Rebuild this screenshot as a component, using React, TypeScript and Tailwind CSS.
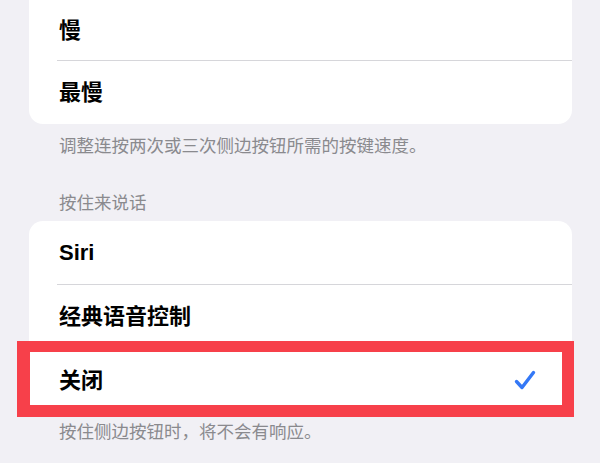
import React from 'react';

const font = { fontFamily: '"Liberation Sans", "Noto Sans CJK SC", sans-serif' };

const Row: React.FC<{ label: string; last?: boolean; checked?: boolean; h?: string }> = ({ label, last, checked, h = 'h-[64px]' }) => (
  <div className={`relative flex items-center pl-[30px] ${h}`}>
    <span className="text-[22px] font-semibold text-black leading-none">{label}</span>
    {checked && (
      <svg className="absolute right-[36px] top-[21px]" width="22" height="20" viewBox="0 0 22 20" fill="none">
        <path d="M2.5 11.5 L8 17.5 L19.5 2.5" stroke="#3478f6" strokeWidth="3.4" strokeLinecap="round" strokeLinejoin="round" />
      </svg>
    )}
    {!last && <div className="absolute bottom-0 left-[28px] right-0 h-px bg-[#d6d6da]" />}
  </div>
);

export default function App() {
  return (
    <div className="w-[600px] h-[463px] overflow-hidden bg-[#f1f0f5]" style={font}>
      <div className="ml-[29px] w-[543px] bg-white rounded-b-[14px]">
        <Row label="慢" h="h-[61px]" />
        <Row label="最慢" h="h-[63px]" last />
      </div>
      <p className="pl-[59px] pt-[11px] text-[17.5px] leading-[22px] text-[#8a8a8e]">
        调整连按两次或三次侧边按钮所需的按键速度。
      </p>

      <p className="pl-[59px] mt-[35px] text-[17.5px] leading-[22px] text-[#8a8a8e]">按住来说话</p>
      <div className="ml-[29px] w-[543px] mt-[7px] bg-white rounded-[14px]">
        <Row label="Siri" />
        <Row label="经典语音控制" />
        <div className="relative">
          <Row label="关闭" last checked />
          {/* red annotation box */}
          <div className="absolute -left-[12px] -right-[2px] -top-[8px] -bottom-[4px] border-[#f7404a] border-t-[11px] border-l-[13px] border-r-[12px] border-b-[12px]" />
        </div>
      </div>
      <p className="pl-[59px] mt-[8px] text-[17.5px] leading-[22px] text-[#8a8a8e]">
        按住侧边按钮时，将不会有响应。
      </p>
    </div>
  );
}
